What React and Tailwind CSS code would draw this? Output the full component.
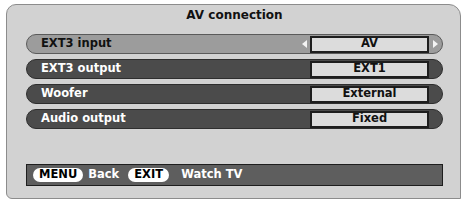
import React from 'react';

const rows = [
  { label: 'EXT3 input', value: 'AV', active: true },
  { label: 'EXT3 output', value: 'EXT1' },
  { label: 'Woofer', value: 'External' },
  { label: 'Audio output', value: 'Fixed' },
];

const font = { fontFamily: '"DejaVu Sans", "Liberation Sans", sans-serif' };

const Arrow = ({ dir }) => (
  <svg width="5" height="8" viewBox="0 0 5 8" className="shrink-0">
    {dir === 'left' ? <path d="M5 0 L0 4 L5 8 Z" fill="#f4f4f4" /> : <path d="M0 0 L5 4 L0 8 Z" fill="#f4f4f4" />}
  </svg>
);

const MenuRow = ({ label, value, active }) => (
  <div
    className={`flex h-[20px] items-center rounded-full border pl-[14px] ${
      active ? 'border-[#5a5a5a] bg-[#9c9c9c] text-[#111]' : 'border-[#2e2e2e] bg-[#4b4b4b] text-white'
    }`}
  >
    <span className="flex-1 text-[11.5px] font-bold leading-none">{label}</span>
    {active && (
      <span className="mr-[3px] flex">
        <Arrow dir="left" />
      </span>
    )}
    <div className="flex h-[17px] w-[119px] items-center justify-center border-2 border-[#1e1e1e] bg-[#dcdcdc] text-[11.5px] font-bold leading-none text-[#111]">
      {value}
    </div>
    <span className="flex w-[13px] justify-center">{active && <Arrow dir="right" />}</span>
  </div>
);

const Key = ({ children }) => (
  <span className="flex h-[14px] items-center rounded-full bg-white px-[6px] text-[11.5px] font-bold leading-none text-black">
    {children}
  </span>
);

export default function App() {
  return (
    <div className="h-[201px] w-[462px] overflow-hidden bg-white pl-[6px] pt-[4px]" style={font}>
      <div className="h-[195px] w-[455px] rounded-tl-[10px] rounded-tr-[12px] rounded-bl-[6px] border border-[#8c8c8c] bg-[#d2d2d2] pl-[19px] pr-[17px]">
        <div className="mb-[11px] mt-[2px] h-[16px] text-center text-[12px] font-bold leading-[16px] text-[#111]">
          AV connection
        </div>
        <div className="flex flex-col gap-[5px]">
          {rows.map((r) => (
            <MenuRow key={r.label} {...r} />
          ))}
        </div>
        <div className="mt-[35px] flex h-[22px] items-center border border-[#1e1e1e] bg-[#5e5e5e] pl-[6px] text-white">
          <Key>MENU</Key>
          <span className="ml-[5px] text-[11.5px] font-bold leading-none">Back</span>
          <span className="ml-[9px]">
            <Key>EXIT</Key>
          </span>
          <span className="ml-[12px] text-[11.5px] font-bold leading-none">Watch TV</span>
        </div>
      </div>
    </div>
  );
}
